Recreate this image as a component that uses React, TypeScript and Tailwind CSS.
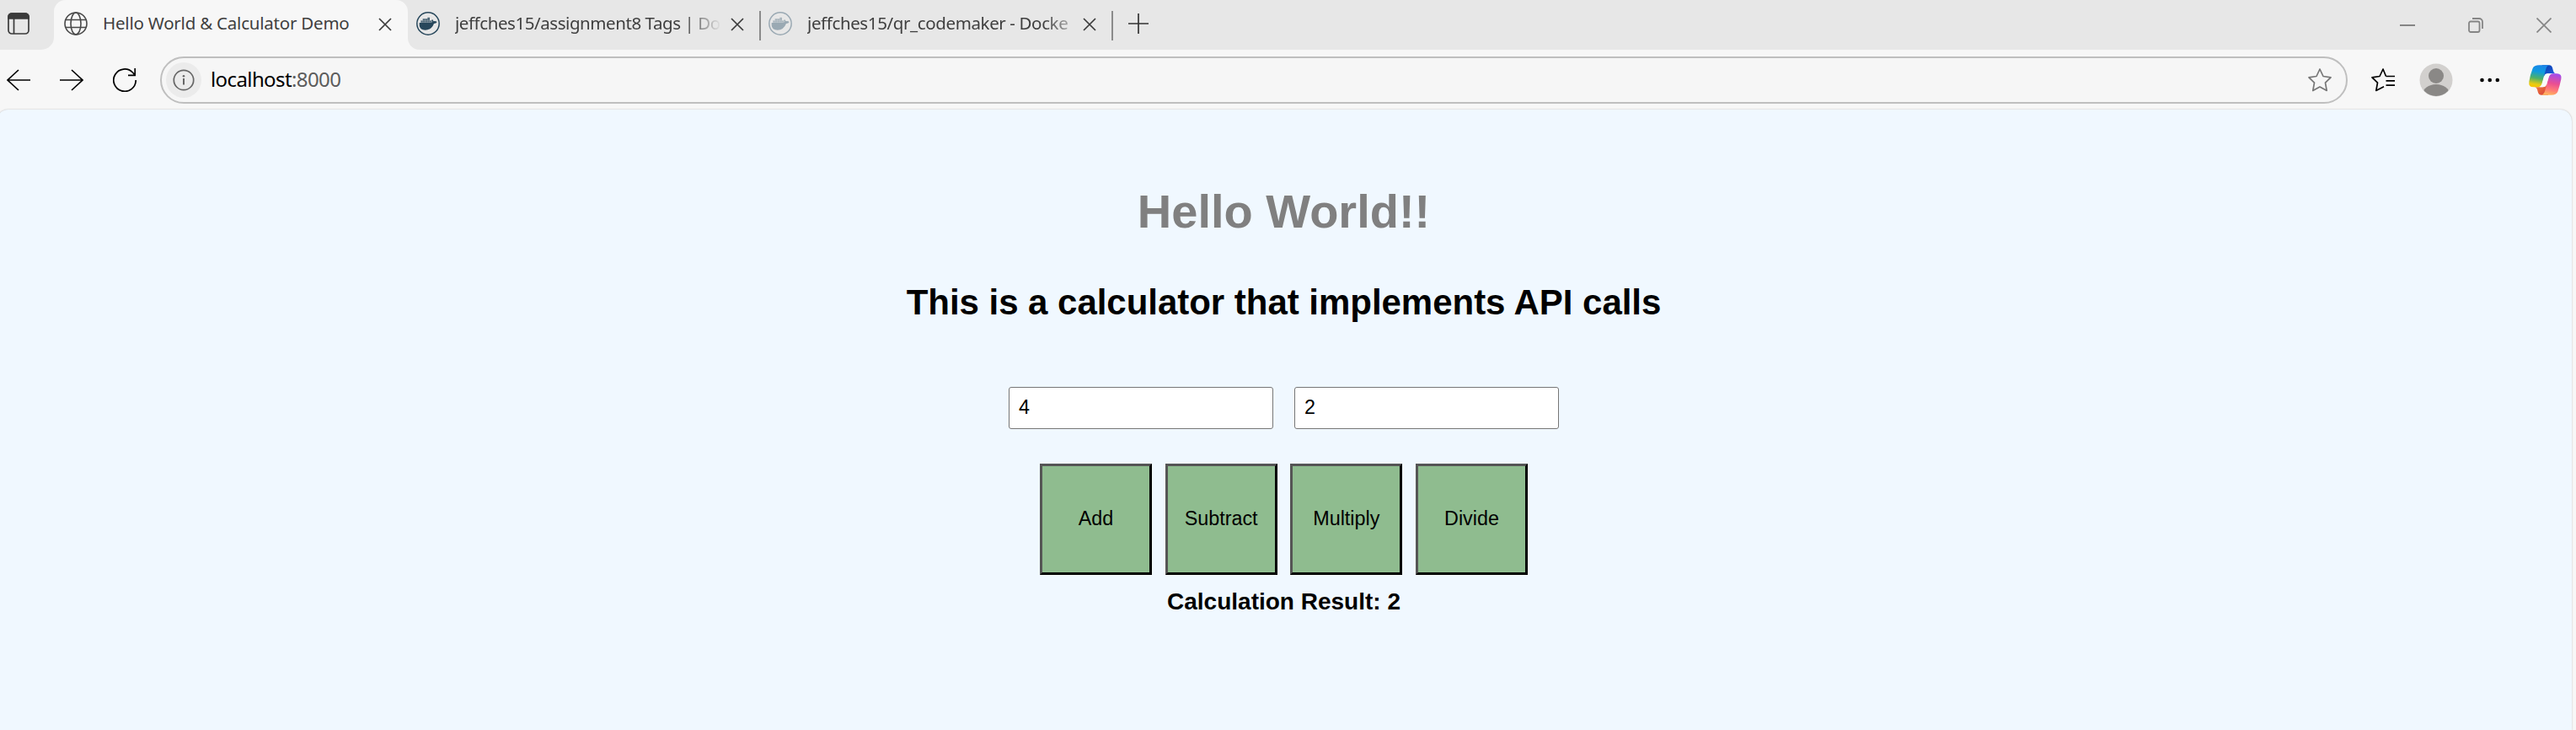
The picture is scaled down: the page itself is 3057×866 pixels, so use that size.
import React from "react";

type IconProps = { className?: string };

const CloseIcon = ({ className = "" }: IconProps) => (
  <svg viewBox="0 0 16 16" className={`h-4 w-4 shrink-0 ${className}`} fill="none" stroke="currentColor" strokeWidth="1.7">
    <path d="M1 1 15 15M15 1 1 15" />
  </svg>
);

const GlobeIcon = () => (
  <svg viewBox="0 0 28 28" className="h-7 w-7 shrink-0" fill="none" stroke="#4a4a4a" strokeWidth="1.6">
    <circle cx="14" cy="14" r="13" />
    <ellipse cx="14" cy="14" rx="6" ry="13" />
    <path d="M2 9.5H26M2 18.500H26" />
  </svg>
);

const DockerIcon = ({ className = "" }: IconProps) => (
  <svg viewBox="0 0 84 84" className={`h-7 w-7 shrink-0 ${className}`}>
    <circle cx="42" cy="42" r="39.500" fill="none" stroke="currentColor" strokeWidth="4.500" />
    <path fill="currentColor" opacity="0.8" d="M16 31h7v-6h17v-5h8v11h6v7H16z" />
    <path
      fill="currentColor"
      d="M11 39H52Q57 38 56 34Q53 31 57 27Q61 30 61 34Q68 32 74 36Q71 42 63 42Q54 65 32 65Q12 65 11 48z"
    />
    <path stroke="#e7e7e7" strokeOpacity="0.5" strokeWidth="1.200" d="M23 31V38M31.500 25V38M40 25V38M48 31V38M16 31.500H54" />
  </svg>
);

const CopilotIcon = () => (
  <svg viewBox="0 0 122 116" className="h-[38.67px] w-[40.67px] shrink-0">
    <defs>
      <linearGradient id="cpLeft" x1="0.55" y1="0" x2="0.4" y2="1">
        <stop offset="0" stopColor="#1a86e8" />
        <stop offset="0.3" stopColor="#0f9be0" />
        <stop offset="0.6" stopColor="#4cb06a" />
        <stop offset="0.88" stopColor="#e8cb12" />
        <stop offset="1" stopColor="#f7c600" />
      </linearGradient>
      <linearGradient id="cpRight" x1="0.6" y1="0" x2="0.4" y2="1">
        <stop offset="0" stopColor="#a34bea" />
        <stop offset="0.45" stopColor="#ea4f92" />
        <stop offset="0.75" stopColor="#ff7a78" />
        <stop offset="1" stopColor="#ffb45c" />
      </linearGradient>
      <linearGradient id="cpTop" x1="0" y1="0" x2="1" y2="1">
        <stop offset="0" stopColor="#0a3fa8" />
        <stop offset="1" stopColor="#1f5fe6" />
      </linearGradient>
      <linearGradient id="cpBottom" x1="0" y1="0" x2="1" y2="1">
        <stop offset="0" stopColor="#f58a3c" />
        <stop offset="1" stopColor="#d63a3a" />
      </linearGradient>
    </defs>
    <path fill="url(#cpTop)" d="M50 4H76Q84 4 87 13L90 24Q93 34 100 34H70Q60 34 58 44z" />
    <path fill="url(#cpBottom)" d="M72 110H48Q39 110 36 101L33 91Q30 82 22 82H52Q62 82 65 70z" />
    <path fill="url(#cpLeft)" d="M40 4H76Q68 5 64 17L50 68Q46 82 34 82H20Q1 82 4 62Q8 38 17 15Q22 4 40 4z" />
    <path fill="url(#cpRight)" d="M83 110H48Q56 109 60 97L74 47Q78 34 90 34H103Q122 34 118 54Q113 78 106 98Q101 110 83 110z" />
    <path fill="#fafafa" d="M72 34H88Q77 35 73 48L64 78Q61 82 52 82H42Q48 80 51 69L57 47Q61 34 72 34z" />
  </svg>
);

const Divider = () => <div className="h-[35px] w-[2px] shrink-0 bg-[#8b8b8b]" />;

const TabTitle = ({ children, className = "" }: { children: React.ReactNode; className?: string }) => (
  <span className={`shrink-0 pb-[2px] text-[20.5px] leading-[30px] whitespace-nowrap text-[#3f3f3f] ${className}`}>{children}</span>
);

const TitleBar = () => (
  <div className="flex h-[59px] bg-[#f7f7f7]">
    <div className="flex w-16 shrink-0 rounded-br-[15px] bg-[#e7e7e7] pt-[15px] pl-[9px]">
      <svg viewBox="0 0 26 26" className="h-[26px] w-[26px]" fill="none" stroke="#3b3b3b" strokeWidth="1.700">
        <rect x="1" y="1" width="24" height="24" rx="4" />
        <path d="M1 7V5a4 4 0 0 1 4-4H21a4 4 0 0 1 4 4V7z" fill="#3b3b3b" />
        <path d="M7.500 7V25" />
      </svg>
    </div>
    <div className="w-[420px] shrink-0 bg-[linear-gradient(#e7e7e7_50%,#f7f7f7_50%)]">
      <div className="flex h-full items-center rounded-t-[14px] bg-[#f7f7f7] pb-[3px] pl-3">
        <GlobeIcon />
        <TabTitle className="ml-[18px] w-[308px] tracking-[-0.22px]">Hello World &amp; Calculator Demo</TabTitle>
        <CloseIcon className="mt-[2px] ml-[19px] text-[#3b3b3b]" />
      </div>
    </div>
    <div className="flex min-w-0 flex-1 items-center rounded-bl-[14px] bg-[#e7e7e7] pb-[3px] pl-[10px]">
      <DockerIcon className="text-[#27475b]" />
      <TabTitle className="ml-[18px] w-[314px] tracking-[-0.43px] [mask-image:linear-gradient(to_right,black_272px,transparent_316px)]">
        jeffches15/assignment8 Tags | Doc
      </TabTitle>
      <CloseIcon className="mt-[2px] ml-[13px] text-[#3b3b3b]" />
      <div className="ml-[18px] pt-[4px]"><Divider /></div>
      <DockerIcon className="ml-[9px] text-[#9aa9b3]" />
      <TabTitle className="ml-[18px] w-[312px] tracking-[-0.38px] [mask-image:linear-gradient(to_right,black_280px,transparent_330px)]">
        jeffches15/qr_codemaker - Docke
      </TabTitle>
      <CloseIcon className="mt-[2px] ml-[15px] text-[#3b3b3b]" />
      <div className="ml-[18px] pt-[4px]"><Divider /></div>
      <svg viewBox="0 0 24 24" className="ml-[18px] h-6 w-6" fill="none" stroke="#333" strokeWidth="1.700">
        <path d="M12 0V24M0 12H24" />
      </svg>
      <div className="mt-[4px] mr-[29px] ml-auto flex items-center gap-[63px] text-[#858585]">
        <svg viewBox="0 0 18 18" className="h-[18px] w-[18px]" stroke="currentColor" strokeWidth="2">
          <path d="M0 9H18" />
        </svg>
        <svg viewBox="0 0 18 18" className="h-[18px] w-[18px]" fill="none" stroke="currentColor" strokeWidth="1.800">
          <rect x="1" y="4.500" width="12.500" height="12.500" rx="2" />
          <path d="M5 1H13a4 4 0 0 1 4 4V13" />
        </svg>
        <svg viewBox="0 0 18 18" className="h-[18px] w-[18px]" fill="none" stroke="currentColor" strokeWidth="1.700">
          <path d="M.5.5 17.500 17.500M17.500.5.5 17.500" />
        </svg>
      </div>
    </div>
  </div>
);

const Toolbar = () => (
  <div className="flex h-[71px] items-center bg-[#f7f7f7] pt-px pr-4 pl-2">
    <svg viewBox="0 0 28 26" className="h-[26px] w-7 shrink-0" fill="none" stroke="#000" strokeWidth="1.700">
      <path d="M14 1 1 13 14 25M1 13H28" />
    </svg>
    <svg viewBox="0 0 28 26" className="ml-[35px] h-[26px] w-7 shrink-0" fill="none" stroke="#000" strokeWidth="1.700">
      <path d="M14 1 27 13 14 25M27 13H0" />
    </svg>
    <svg viewBox="0 0 28 28" className="ml-[35px] h-7 w-7 shrink-0" fill="none" stroke="#000" strokeWidth="1.700">
      <path d="M27.200 14A13.200 13.200 0 1 1 23.500 5L26 8M26.200 0V8.300H18" />
    </svg>
    <div className="ml-7 flex h-14 w-[2596px] shrink-0 items-center rounded-full border-2 border-[#bfbfbf] bg-[#f6f6f6] pr-[17px] pl-[5px]">
      <div className="flex h-[42px] w-[42px] shrink-0 items-center justify-center rounded-full bg-[#ebebeb]">
        <svg viewBox="0 0 26 26" className="h-[26px] w-[26px]" fill="none" stroke="#666" strokeWidth="1.700">
          <circle cx="13" cy="13" r="11.700" />
          <path d="M13 11V18.500" strokeWidth="2" />
          <circle cx="13" cy="8.300" r="1.300" fill="#666" stroke="none" />
        </svg>
      </div>
      <span className="ml-[11px] pb-[2px] text-[24px] leading-8 tracking-[-0.6px] text-[#5c5c5c]">
        <span className="text-black">localhost</span>:8000
      </span>
      <svg viewBox="0 0 28 28" className="ml-auto h-7 w-7" fill="none" stroke="#777" strokeWidth="1.700" strokeLinejoin="round">
        <path d="M14 1 18 9.500 27 10.800 20.500 17.200 22.200 26.500 14 22 5.800 26.500 7.500 17.200 1 10.800 10 9.500z" />
      </svg>
    </div>
    <svg viewBox="0 0 28 28" className="ml-7 h-7 w-7 shrink-0" fill="none" stroke="#000" strokeWidth="1.700" strokeLinejoin="round">
      <path d="M17.500 9.500 14 1 10 9.500 1 10.800 7.500 17.200 5.800 26.500 15 21.800M17.500 9.500H28M17.500 14.900H28M17.500 20.200H28" />
    </svg>
    <svg viewBox="0 0 40 40" className="ml-[29px] h-10 w-10 shrink-0">
      <clipPath id="avatar"><circle cx="20" cy="20" r="19" /></clipPath>
      <circle cx="20" cy="20" r="19.500" fill="#d2d0ce" />
      <g clipPath="url(#avatar)" fill="#8a8886">
        <circle cx="20" cy="15" r="9" />
        <ellipse cx="20" cy="37" rx="16" ry="12" />
      </g>
    </svg>
    <svg viewBox="0 0 24 6" className="ml-8 h-[6px] w-6 shrink-0">
      <circle cx="2.500" cy="3" r="2.300" />
      <circle cx="11.700" cy="3" r="2.300" />
      <circle cx="20.800" cy="3" r="2.300" />
    </svg>
    <div className="ml-auto"><CopilotIcon /></div>
  </div>
);

const NumberField = ({ value }: { value: string }) => (
  <input
    readOnly
    value={value}
    className="h-[50px] w-[314px] rounded-[3px] border border-[#767676] bg-white pb-[2px] pl-[11px] text-[23.33px] text-black"
  />
);

const operations = ["Add", "Subtract", "Multiply", "Divide"];

const Calculator = () => (
  <div className="mr-[5px] -ml-1 flex flex-1 flex-col items-center rounded-t-[14px] bg-[#f0f8ff] pr-px font-['Liberation_Sans',Arial,sans-serif] text-black shadow-[0_0_2px_#b8b8b8]">
    <h1 className="mt-[89px] text-[56px] leading-[64px] font-bold text-[#808080]">Hello World!!</h1>
    <h2 className="mt-[52px] text-[42px] leading-[48px] font-bold tracking-[-0.03px]">This is a calculator that implements API calls</h2>
    <div className="mt-[76px] flex gap-[25px]">
      <NumberField value="4" />
      <NumberField value="2" />
    </div>
    <div className="mt-[41px] flex gap-[15.67px]">
      {operations.map((name) => (
        <button
          key={name}
          className="h-[132px] w-[133px] border-3 border-t-[#555] border-r-black border-b-black border-l-[#555] bg-[#8fbc8f] pb-[2px] text-[23.33px]"
        >
          {name}
        </button>
      ))}
    </div>
    <h4 className="mt-[16px] text-[28px] leading-8 font-bold">Calculation Result: 2</h4>
  </div>
);

export default function App() {
  return (
    <div className="flex h-[866px] w-[3057px] flex-col overflow-hidden bg-[#f7f7f7] font-['Noto_Sans','Open_Sans',sans-serif]">
      <TitleBar />
      <Toolbar />
      <Calculator />
    </div>
  );
}
